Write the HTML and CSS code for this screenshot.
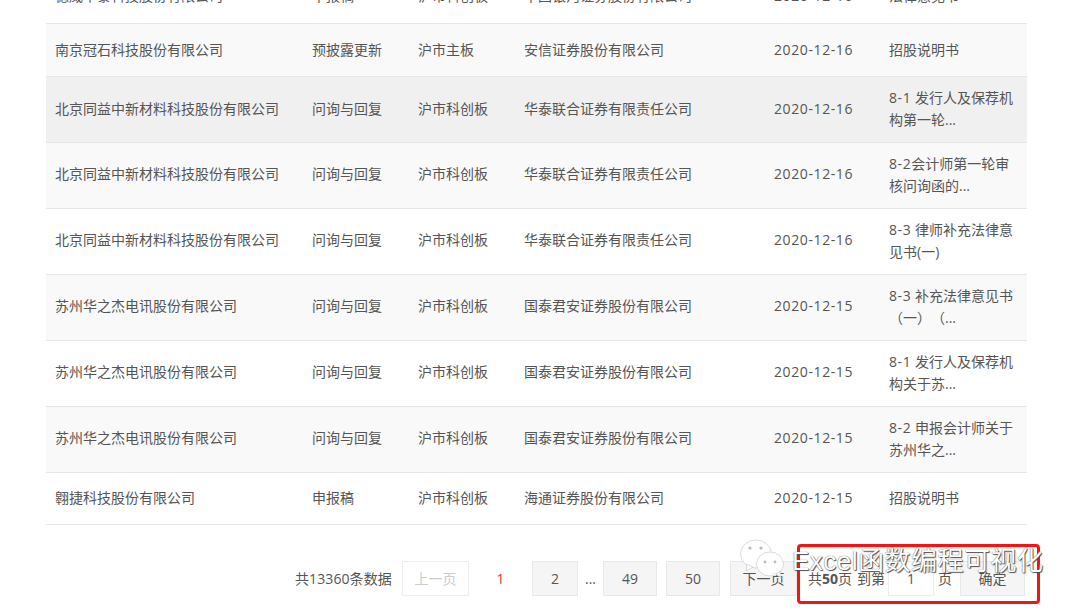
FILE: index.html
```html
<!DOCTYPE html>
<html lang="zh-CN">
<head>
<meta charset="utf-8">
<title>信息披露列表</title>
<link rel="stylesheet" href="styles.css">
</head>
<body>
<div class="page">
  <table class="list">
    <colgroup><col class="c1"><col class="c2"><col class="c3"><col class="c4"><col class="c5"><col class="c6"></colgroup>
    <tbody>
      <tr><td>德威华泰科技股份有限公司</td><td>申报稿</td><td>沪市科创板</td><td>中国银河证券股份有限公司</td><td class="date">2020-12-16</td><td>法律意见书</td></tr>
      <tr class="alt"><td>南京冠石科技股份有限公司</td><td>预披露更新</td><td>沪市主板</td><td>安信证券股份有限公司</td><td class="date">2020-12-16</td><td>招股说明书</td></tr>
      <tr class="hover tall"><td>北京同益中新材料科技股份有限公司</td><td>问询与回复</td><td>沪市科创板</td><td>华泰联合证券有限责任公司</td><td class="date">2020-12-16</td><td><span class="num">8-1</span> 发行人及保荐机构第一轮...</td></tr>
      <tr class="alt tall"><td>北京同益中新材料科技股份有限公司</td><td>问询与回复</td><td>沪市科创板</td><td>华泰联合证券有限责任公司</td><td class="date">2020-12-16</td><td><span class="num">8-2</span>会计师第一轮审核问询函的...</td></tr>
      <tr class="tall"><td>北京同益中新材料科技股份有限公司</td><td>问询与回复</td><td>沪市科创板</td><td>华泰联合证券有限责任公司</td><td class="date">2020-12-16</td><td><span class="num">8-3</span> 律师补充法律意见书(一)</td></tr>
      <tr class="alt tall"><td>苏州华之杰电讯股份有限公司</td><td>问询与回复</td><td>沪市科创板</td><td>国泰君安证券股份有限公司</td><td class="date">2020-12-15</td><td><span class="num">8-3</span> 补充法律意见书（一）（...</td></tr>
      <tr class="tall"><td>苏州华之杰电讯股份有限公司</td><td>问询与回复</td><td>沪市科创板</td><td>国泰君安证券股份有限公司</td><td class="date">2020-12-15</td><td><span class="num">8-1</span> 发行人及保荐机构关于苏...</td></tr>
      <tr class="alt tall"><td>苏州华之杰电讯股份有限公司</td><td>问询与回复</td><td>沪市科创板</td><td>国泰君安证券股份有限公司</td><td class="date">2020-12-15</td><td><span class="num">8-2</span> 申报会计师关于苏州华之...</td></tr>
      <tr class="last"><td>翱捷科技股份有限公司</td><td>申报稿</td><td>沪市科创板</td><td>海通证券股份有限公司</td><td class="date">2020-12-15</td><td>招股说明书</td></tr>
    </tbody>
  </table>
  <nav class="pager">
    <span class="total">共13360条数据</span>
    <a class="btn prev">上一页</a>
    <span class="current">1</span>
    <a class="btn n2">2</a>
    <span class="dots">...</span>
    <a class="btn n49">49</a>
    <a class="btn n50">50</a>
    <a class="btn next">下一页</a>
    <span class="pages">共<b>50</b>页</span>
    <span class="goto">到第</span>
    <span class="input">1</span>
    <span class="unit">页</span>
    <a class="btn ok">确定</a>
  </nav>
</div>
<div class="redbox"></div>
<div class="mark">
  <svg class="wx" width="46" height="42" viewBox="0 0 46 42">
    <ellipse class="bubble" cx="16" cy="17" rx="15.500" ry="14"/>
    <path class="bubble" d="M7 27l-1 7 7-4z"/>
    <ellipse class="bubble" cx="30" cy="27" rx="13.500" ry="12"/>
    <path class="bubble" d="M36 37l5 4-1-7z"/>
    <circle class="dot" cx="10" cy="11" r="1.600"/><circle class="dot" cx="21" cy="11" r="1.600"/>
    <circle class="dot" cx="25" cy="25" r="1.400"/><circle class="dot" cx="35" cy="25" r="1.400"/>
  </svg>
  <span class="mark-text">Excel函数编程可视化</span>
</div>
</body>
</html>
```
FILE: styles.css
```css
* { box-sizing: border-box; }
html, body { margin: 0; padding: 0; background: #fff; }
body {
  width: 1080px;
  height: 608px;
  overflow: hidden;
  position: relative;
  font-family: "Open Sans", "Noto Sans CJK SC", sans-serif;
  font-size: 14px;
  color: #555;
  text-spacing-trim: space-all;
}
.page { padding: 0 53px 0 46px; margin-top: -30px; }
.list { width: 981px; border-collapse: collapse; table-layout: fixed; }
.c1 { width: 257px; }
.c2, .c3 { width: 106px; }
.c4 { width: 250px; }
.c5 { width: 115px; }
.c6 { width: 147px; }
.list tr { border-bottom: 1px solid #e6e6e6; }
.list td { height: 53px; padding: 0 9px; line-height: 22px; vertical-align: middle; }
.list .tall td { height: 66px; padding-bottom: 2px; }
.list .tall td:last-child, .list .hover td { padding-bottom: 0; }
.list .last td { height: 52px; }
.list .alt { background: #f9f9f9; }
.list .hover { background: #f0f0f0; }
.list .date { letter-spacing: .6px; }
.num { letter-spacing: .6px; }

.pager { display: flex; align-items: center; height: 35px; margin: 36px 0 0 249px; white-space: nowrap; }
.btn { display: flex; align-items: center; justify-content: center; height: 35px; background: #f5f5f5; border: 1px solid #e8e8e8; }
.total { width: 107px; letter-spacing: .1px; }
.prev { width: 67px; background: #fff; border-color: #eee; color: #ccc; }
.current { width: 63px; text-align: center; color: #e33; }
.n2 { width: 46px; }
.dots { width: 25px; text-align: center; }
.n49 { width: 54px; }
.n50 { width: 54px; margin-left: 9px; }
.next { width: 67px; margin-left: 10px; }
.pages { margin-left: 11px; width: 49px; }
.pages b { font-weight: 700; }
.goto { width: 31px; }
.input { width: 46px; height: 35px; line-height: 33px; text-align: center; border: 1px solid #eee; background: #fff; }
.unit { width: 26px; padding-left: 4px; }
.ok { width: 65px; }

.redbox { position: absolute; left: 797px; top: 544px; width: 243px; height: 60px; border: 3px solid #f51414; border-radius: 4px; }
.mark { position: absolute; left: 740px; top: 537px; display: flex; align-items: center; }
.wx .bubble { fill: rgba(255,255,255,.9); stroke: #ccc; stroke-width: .7; }
.wx .dot { fill: #bbb; }
.mark-text { margin-left: 6px; font-family: "Liberation Sans", "Noto Sans CJK SC", sans-serif; font-size: 26px; letter-spacing: .5px; color: #fff; text-shadow: 0 0 1px #333, 1px 1px 1px #555; }
```
